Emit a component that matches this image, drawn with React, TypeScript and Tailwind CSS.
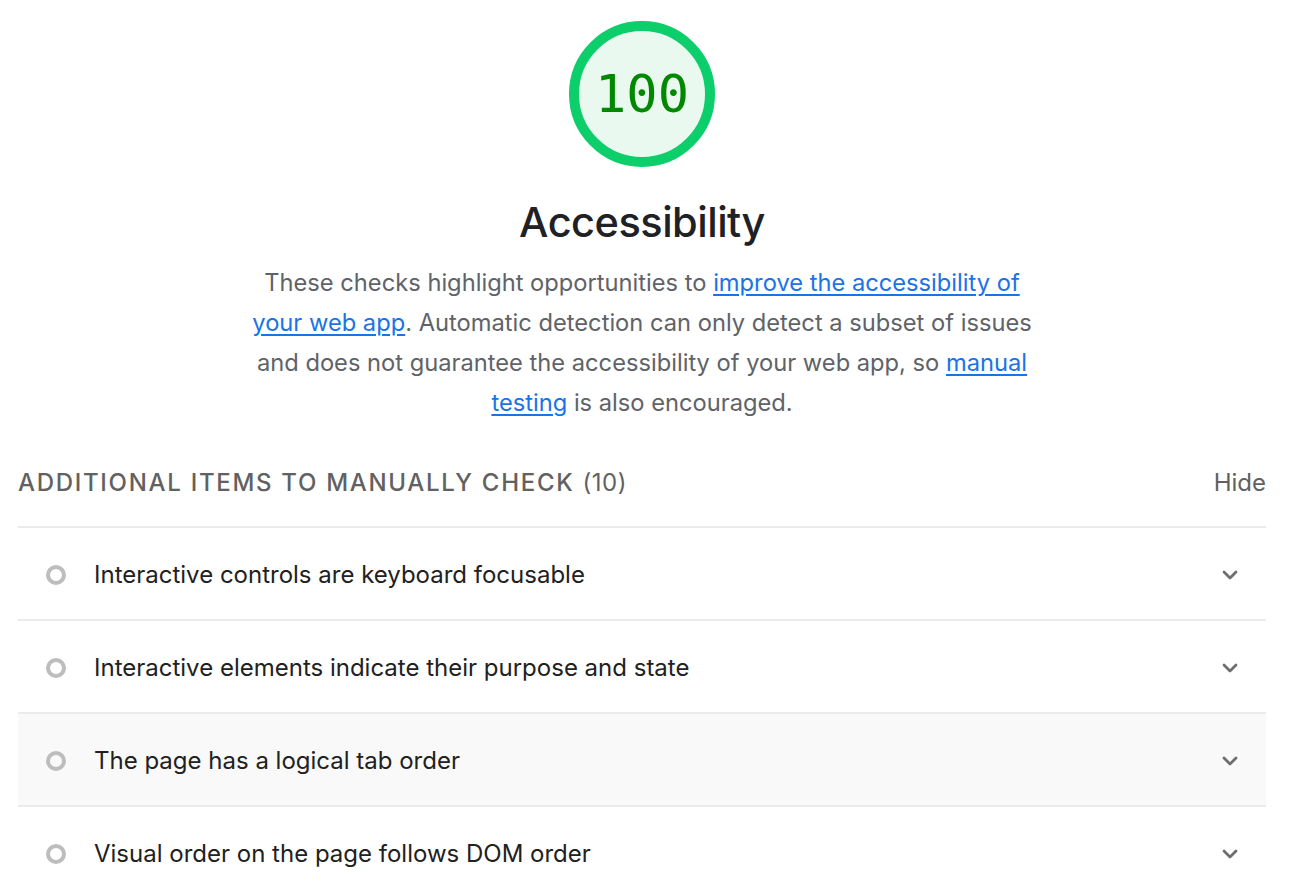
import { ChevronDown } from 'lucide-react';

const items = [
    { label: 'Interactive controls are keyboard focusable', shaded: false },
    { label: 'Interactive elements indicate their purpose and state', shaded: false },
    { label: 'The page has a logical tab order', shaded: true },
    { label: 'Visual order on the page follows DOM order', shaded: false },
];

function Gauge() {
    return (
        <div className="relative w-[148px] h-[148px]">
            <svg viewBox="0 0 148 148" className="absolute inset-0 w-full h-full">
                <circle cx="74" cy="74" r="68" fill="#e9f9ef" stroke="#0cce6b" strokeWidth="10" />
            </svg>
            <div className="absolute inset-0 flex items-center justify-center font-['DejaVu_Sans_Mono',monospace] text-[52px] text-[#008800]">
                100
            </div>
        </div>
    );
}

export default function App() {
    return (
        <div className="min-h-screen bg-white font-['Inter',sans-serif] pl-[18px] pr-[24px] overflow-hidden">
            <div className="flex flex-col items-center pt-[20px]">
                <Gauge />
                <h1 className="mt-[26px] text-[41.5px] leading-[56px] font-medium tracking-[-0.5px] text-[#202124]">Accessibility</h1>
                <p className="mt-[13px] w-[860px] text-center text-[23.7px] leading-[40px] text-[#5f6368]">
                    These checks highlight opportunities to{' '}
                    <a className="text-[#1a73e8] underline underline-offset-[3px]">improve the accessibility of</a>
                    <br />
                    <a className="text-[#1a73e8] underline underline-offset-[3px]">your web app</a>
                    . Automatic detection can only detect a subset of issues
                    <br />
                    and does not guarantee the accessibility of your web app, so{' '}
                    <a className="text-[#1a73e8] underline underline-offset-[3px]">manual</a>
                    <br />
                    <a className="text-[#1a73e8] underline underline-offset-[3px]">testing</a> is also encouraged.
                </p>
            </div>

            <div className="mt-[45px] flex items-center justify-between leading-[30px] pb-[28px] border-b-2 border-[#ebebeb]">
                <div className="text-[24px] tracking-[1.7px] text-[#616161] font-medium">
                    ADDITIONAL ITEMS TO MANUALLY CHECK <span className="font-normal tracking-[0.5px]">(10)</span>
                </div>
                <div className="text-[24px] text-[#616161]">Hide</div>
            </div>

            {items.map((item) => (
                <div
                    key={item.label}
                    className={`flex items-center h-[93px] pt-[2px] border-b-2 border-[#ebebeb] ${item.shaded ? 'bg-[#f9f9f9]' : 'bg-white'}`}
                >
                    <div className="w-[76px] flex justify-center">
                        <span className="block w-[20px] h-[20px] rounded-full border-[4px] border-[#bdbdbd]" />
                    </div>
                    <div className="flex-1 text-[24px] text-[#212121]">{item.label}</div>
                    <ChevronDown className="mr-[24px] w-[24px] h-[24px] text-[#6e6e6e]" strokeWidth={2.8} />
                </div>
            ))}
        </div>
    );
}
